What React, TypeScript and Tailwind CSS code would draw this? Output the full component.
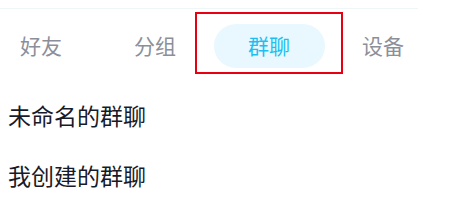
export default function App() {
  const tabs = ["好友", "分组", "群聊", "设备"];
  const rows = ["未命名的群聊", "我创建的群聊"];
  return (
    <div
      className="relative w-[455px] h-[213px] overflow-hidden bg-white"
      style={{ fontFamily: '"Noto Sans CJK SC", "Noto Sans", sans-serif' }}
    >
      <div className="h-[9px] w-[418px] border-b border-[#eef6f8]" />
      <div className="mt-[15px] ml-[-16px] flex h-[44px]">
        {tabs.map((t) => {
          const active = t === "群聊";
          return (
            <div key={t} className="flex w-[114px] items-center justify-center">
              <div
                className={
                  active
                    ? "flex h-[44px] w-[111px] items-center justify-center rounded-full bg-[#e9f8fe] text-[21px] text-[#1cc0f0]"
                    : "flex h-[44px] w-[111px] items-center justify-center text-[21px] text-[#8c8f99]"
                }
              >
                {t}
              </div>
            </div>
          );
        })}
      </div>
      <div className="mt-[17px]">
        {rows.map((r) => (
          <div key={r} className="flex h-[60px] items-center pl-[8px] text-[23px] text-[#171a28]">
            {r}
          </div>
        ))}
      </div>
      <div className="absolute left-[195px] top-[12px] h-[62px] w-[148px] border-2 border-[#e60012]" />
    </div>
  );
}
